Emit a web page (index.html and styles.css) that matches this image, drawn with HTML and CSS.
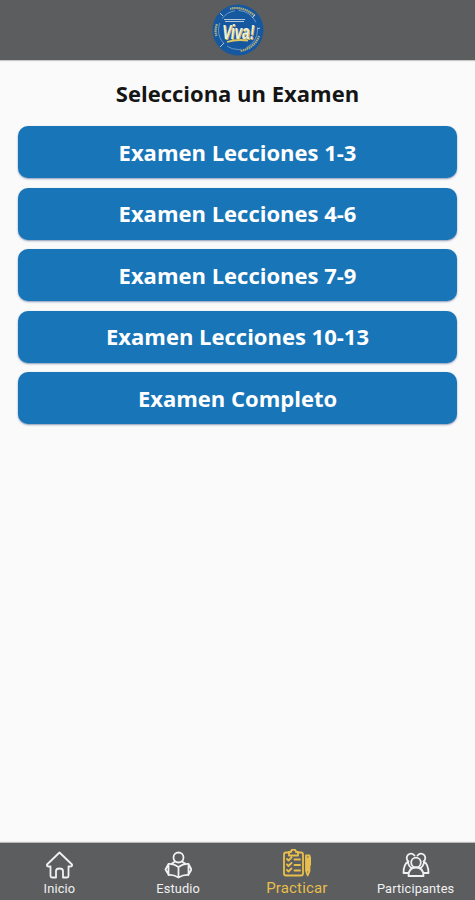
FILE: index.html
```html
<!DOCTYPE html>
<html lang="es">
<head>
    <meta charset="UTF-8">
    <meta name="viewport" content="width=device-width, initial-scale=1.0">
    <title>Selecciona un Examen</title>
    <link rel="stylesheet" href="styles.css">
</head>
<body>
    <div class="app">
        <header class="header">
            <svg class="logo" viewBox="0 0 52 52" role="img" aria-label="Viva!">
                <circle cx="26" cy="26" r="25.5" fill="#1558a0"/>
                <circle class="logo-ring" cx="26" cy="26" r="19.5"/>
                <path class="logo-mark" d="M18 4.800Q31 1.500 43 12M47 32Q43 44 28 47"/>
                <path class="logo-mark" d="M4.500 32Q2.500 27 5 20"/>
                <path class="logo-line" d="M8 9l3 3M43 11l-3 3M8 43l4-4M45 25l3-1"/>
                <path class="logo-line" d="M12 15.500h21M13 17.500h19"/>
                <path class="logo-under" d="M15 38q9-3 21-1.500"/>
                <text class="logo-text back" transform="translate(11 36) scale(0.68 1)">Viva!</text>
                <text class="logo-text" transform="translate(10.2 35.3) scale(0.68 1)">Viva!</text>
            </svg>
        </header>

        <main class="content">
            <h1 class="title">Selecciona un Examen</h1>
            <div class="exam-list">
                <button type="button">Examen Lecciones 1-3</button>
                <button type="button">Examen Lecciones 4-6</button>
                <button type="button">Examen Lecciones 7-9</button>
                <button type="button">Examen Lecciones 10-13</button>
                <button type="button">Examen Completo</button>
            </div>
        </main>

        <nav class="tab-bar">
            <a class="tab">
                <svg class="icon" viewBox="0 0 28 28">
                    <path d="M14.500 1.500L2 13.500q-.5 2 2 2H5.500V25q0 1.500 1.500 1.500h4V20q0-2.500 3.500-2.500t3.500 2.500v6.500h4q1.500 0 1.500-1.500v-9.500H25q2.500 0 2-2z"/>
                </svg>
                <span>Inicio</span>
            </a>
            <a class="tab">
                <svg class="icon" viewBox="0 0 28 28">
                    <circle cx="14.500" cy="6.500" r="5"/>
                    <path d="M14.500 16Q9.500 12.500 4.500 13v11q5-.5 10 2.500 5-3 10-2.500V13q-5-.5-10 3zM14.500 16v10M8 12.500L11 10.500M21 12.500L18 10.500M4.500 13L1.500 18.500l3 5M24.500 13l3 5.500-3 5"/>
                </svg>
                <span>Estudio</span>
            </a>
            <a class="tab active">
                <svg class="icon" viewBox="0 0 28 28">
                    <path d="M6 3.500H3Q1 3.500 1 5.500v19q0 2 2 2h15q2 0 2-2v-19q0-2-2-2h-3"/>
                    <path d="M6 3h2q0-2.500 2.500-2.500T13 3h2v3.500H6zM11.500 10.500H17M11.500 16H17M11.500 21.500H17M4 10l1.500 1.500L8.500 8.500M4 15.500L5.500 17l3-3M4 21l1.500 1.500 3-3"/>
                    <path d="M23 6.500h3.500V22L24.700 26.500 23 22zM23 9.500h3.500M23 21.500h3.500M26.500 8.500h1.500v7M24.700 10v11"/>
                </svg>
                <span>Practicar</span>
            </a>
            <a class="tab">
                <svg class="icon" viewBox="0 0 28 28">
                    <path d="M12.500 4.500A4.300 4.300 0 1 0 6.500 10.500M15.500 4.500A4.300 4.300 0 1 1 21.500 10.500"/>
                    <circle cx="14" cy="11.500" r="4.800"/>
                    <path d="M6.500 25q0-8.500 7.500-8.500t7.500 8.500zM6 10.500q-4.500 3-4.500 11.500h5M22 10.500q4.500 3 4.500 11.500h-5M6 11q.5 4.500 4 6M22 11q-.5 4.500-4 6"/>
                </svg>
                <span>Participantes</span>
            </a>
        </nav>
    </div>
</body>
</html>
```
FILE: styles.css
```css
:root {
    --bar-color: #5b5d5f;
    --primary-color: #1875b7;
    --accent-color: #e8be4c;
    --background-color: #fafafa;
}

body, html {
    height: 100%;
    margin: 0;
    font-family: "Open Sans", "Noto Sans", sans-serif;
    background-color: var(--background-color);
    color: #151515;
}

.app {
    display: flex;
    flex-direction: column;
    height: 100%;
}

.header {
    display: flex;
    justify-content: center;
    align-items: center;
    height: 60px;
    flex-shrink: 0;
    background-color: var(--bar-color);
    box-shadow: 0 1px 1px rgba(0, 0, 0, 0.2);
}

.logo {
    width: 52px;
    height: 52px;
    overflow: visible;
}

.logo-ring {
    fill: none;
    stroke: #7fa6c6;
    stroke-width: 0.8;
    stroke-dasharray: 22 5 15 4;
}

.logo-mark {
    fill: none;
    stroke: #b5ad78;
    stroke-width: 2.2;
    stroke-dasharray: 1.5 0.6;
}

.logo-line {
    fill: none;
    stroke: #b3c8d8;
    stroke-width: 1;
}

.logo-under {
    fill: none;
    stroke: #e0c862;
    stroke-width: 1.8;
}

.logo-text {
    font-family: "Liberation Sans", sans-serif;
    font-size: 20px;
    font-style: italic;
    font-weight: bold;
    fill: #f0efe0;
}

.logo-text.back {
    fill: #d6b751;
}

.content {
    flex: 1;
    padding: 0 18px;
}

.title {
    margin: 18px 0 17px;
    font-size: 22px;
    line-height: 31px;
    font-weight: bold;
    text-align: center;
}

.exam-list {
    display: flex;
    flex-direction: column;
    gap: 9.5px;
}

button {
    height: 52px;
    padding: 0 0 1px;
    border: none;
    border-radius: 10px;
    background-color: var(--primary-color);
    box-shadow: 0 1px 2px rgba(30, 60, 120, 0.5);
    color: white;
    font-family: inherit;
    font-size: 22px;
    font-weight: bold;
}

.tab-bar {
    display: flex;
    height: 57px;
    flex-shrink: 0;
    background-color: var(--bar-color);
    box-shadow: 0 -1px 1px rgba(0, 0, 0, 0.25);
}

.tab {
    display: flex;
    flex: 1 1 0;
    flex-direction: column;
    align-items: center;
    padding-top: 8px;
    color: #f1f1f1;
    font-family: Roboto, sans-serif;
    font-size: 12.8px;
    letter-spacing: 0.15px;
    line-height: 15px;
}

.icon {
    width: 28px;
    height: 28px;
    margin-bottom: 2px;
    fill: none;
    stroke: currentColor;
    stroke-width: 1.8;
    stroke-linejoin: round;
    stroke-linecap: round;
}

.tab.active {
    padding-top: 6px;
    color: var(--accent-color);
    font-size: 15px;
    line-height: 18px;
}
```
